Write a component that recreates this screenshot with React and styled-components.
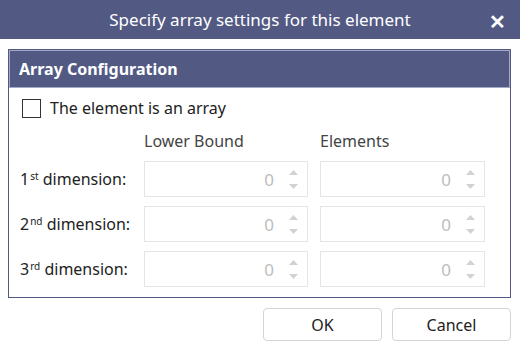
import React from 'react'
import styled, { createGlobalStyle } from 'styled-components'

const Global = createGlobalStyle`
  body {
    margin: 0;
    background: #fff;
    font-family: "Noto Sans", "Open Sans", sans-serif;
    color: #222;
  }
`

const Dialog = styled.div`
  width: 520px;
  height: 351px;
  display: flex;
  flex-direction: column;
`

const TitleBar = styled.div`
  height: 39px;
  background: #525a84;
  color: #fff;
  display: flex;
  align-items: center;
  justify-content: center;
  position: relative;
  font-size: 17px;
`

const Close = styled.span`
  position: absolute;
  right: 14px;
  top: 8px;
  font-size: 20px;
  font-weight: 700;
`

const Panel = styled.div`
  margin: 10px 9px 0 8px;
  border: 1px solid #525a84;
  height: 249px;
  box-sizing: border-box;
`

const PanelHeader = styled.div`
  height: 38px;
  background: #525a84;
  border: 1px solid #a3a8c6;
  box-sizing: border-box;
  color: #fff;
  font-weight: 700;
  font-size: 16px;
  display: flex;
  align-items: center;
  padding-left: 9px;
`

const Body = styled.div`
  padding: 10px 0 0 11px;
`

const CheckRow = styled.label`
  display: flex;
  align-items: center;
  gap: 9px;
  font-size: 16px;
  height: 20px;
  margin-left: 2px;
`

const Box = styled.span`
  width: 17px;
  height: 17px;
  border: 1px solid #333;
  background: #fff;
`

const Grid = styled.div`
  display: grid;
  grid-template-columns: 112px 164px 165px;
  column-gap: 12px;
  row-gap: 9px;
  margin-top: 12px;
  align-items: center;
`

const ColHead = styled.div`
  font-size: 16px;
  color: #444;
  height: 22px;
  line-height: 22px;
`

const RowLabel = styled.div`
  font-size: 16px;
  white-space: nowrap;
  sup {
    font-size: 10px;
    vertical-align: 5px;
    margin-left: 1px;
  }
`

const Spin = styled.div`
  height: 36px;
  border: 1px solid #e5e5e5;
  box-sizing: border-box;
  display: flex;
  align-items: center;
  justify-content: flex-end;
  padding-right: 9px;
  gap: 15px;
  color: #bdbdbd;
  font-size: 17px;
`

const Arrows = styled.div`
  display: flex;
  flex-direction: column;
  gap: 9px;
`

const Footer = styled.div`
  display: flex;
  justify-content: flex-end;
  gap: 10px;
  padding: 10px 9px 0 0;
`

const Button = styled.button`
  width: 119px;
  height: 33px;
  border: 1px solid #d4d4d4;
  border-radius: 4px;
  background: #fff;
  font-family: inherit;
  font-size: 16px;
  color: #222;
`

const Arrow = ({ up }) => (
  <svg width="9" height="5" viewBox="0 0 9 5">
    <path d={up ? 'M4.5 0 L9 5 L0 5 Z' : 'M0 0 L9 0 L4.5 5 Z'} fill="#d2d2d2" />
  </svg>
)

const SpinBox = () => (
  <Spin>
    0
    <Arrows>
      <Arrow up />
      <Arrow />
    </Arrows>
  </Spin>
)

const dims = [['1', 'st'], ['2', 'nd'], ['3', 'rd']]

export default function App() {
  return (
    <Dialog>
      <Global />
      <TitleBar>
        Specify array settings for this element
        <Close>✕</Close>
      </TitleBar>
      <Panel>
        <PanelHeader>Array Configuration</PanelHeader>
        <Body>
          <CheckRow>
            <Box />
            The element is an array
          </CheckRow>
          <Grid>
            <span />
            <ColHead>Lower Bound</ColHead>
            <ColHead>Elements</ColHead>
            {dims.map(([n, s]) => (
              <React.Fragment key={n}>
                <RowLabel>
                  {n}
                  <sup>{s}</sup> dimension:
                </RowLabel>
                <SpinBox />
                <SpinBox />
              </React.Fragment>
            ))}
          </Grid>
        </Body>
      </Panel>
      <Footer>
        <Button>OK</Button>
        <Button>Cancel</Button>
      </Footer>
    </Dialog>
  )
}
